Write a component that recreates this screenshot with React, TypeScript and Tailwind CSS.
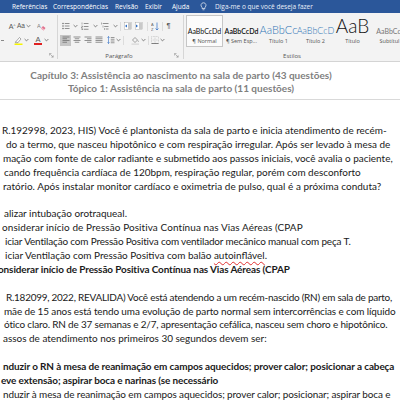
import React from "react";

type Line = { t: string; ml: number; b?: boolean; squiggle?: string; tr?: string };

const lines: Line[] = [
  { t: "R.192998, 2023, HIS) Você é plantonista da sala de parto e inicia atendimento de recém-", ml: 2 },
  { t: "do a termo, que nasceu hipotônico e com respiração irregular. Após ser levado à mesa de", ml: 6 },
  { t: "mação com fonte de calor radiante e submetido aos passos iniciais, você avalia o paciente,", ml: 3 },
  { t: "cando frequência cardíaca de 120bpm, respiração regular, porém com desconforto", ml: 4 },
  { t: "ratório. Após instalar monitor cardíaco e oximetria de pulso, qual é a próxima conduta?", ml: 3, tr: "tracking-[0.05px]" },
  { t: "", ml: 0 },
  { t: "alizar intubação orotraqueal.", ml: 4 },
  { t: "onsiderar início de Pressão Positiva Contínua nas Vias Aéreas (CPAP", ml: 2, tr: "tracking-[0.1px]" },
  { t: "iciar Ventilação com Pressão Positiva com ventilador mecânico manual com peça T.", ml: 5, tr: "tracking-[-0.15px]" },
  { t: "iciar Ventilação com Pressão Positiva com balão ", ml: 5, squiggle: "autoinflável" },
  { t: "onsiderar início de Pressão Positiva Contínua nas Vias Aéreas (CPAP", ml: -2, b: true, tr: "tracking-[-0.1px]" },
  { t: "", ml: 0 },
  { t: "R.182099, 2022, REVALIDA) Você está atendendo a um recém-nascido (RN) em sala de parto,", ml: 6, tr: "tracking-[-0.24px]" },
  { t: "mãe de 15 anos está tendo uma evolução de parto normal sem intercorrências e com líquido", ml: 4, tr: "tracking-[-0.1px]" },
  { t: "ótico claro. RN de 37 semanas e 2/7, apresentação cefálica, nasceu sem choro e hipotônico.", ml: 4, tr: "tracking-[-0.16px]" },
  { t: "assos de atendimento nos primeiros 30 segundos devem ser:", ml: 3 },
  { t: "", ml: 0 },
  { t: "nduzir o RN à mesa de reanimação em campos aquecidos; prover calor; posicionar a cabeça", ml: 3, b: true, tr: "tracking-[-0.1px]" },
  { t: "eve extensão; aspirar boca e narinas (se necessário", ml: 1, b: true, tr: "tracking-[-0.1px]" },
  { t: "nduzir à mesa de reanimação em campos aquecidos; prover calor; posicionar; aspirar boca e", ml: 3, tr: "tracking-[-0.1px]" },
];

const G = "#666";

function Chevron() {
  return (
    <svg width="5" height="4" viewBox="0 0 5 4">
      <path d="M0.6 1 L2.5 2.9 L4.4 1" fill="none" stroke={G} strokeWidth="0.8" />
    </svg>
  );
}

function Launcher() {
  return (
    <svg width="5" height="5" viewBox="0 0 6 6">
      <path d="M0.5 3 V0.5 H3" fill="none" stroke="#888" strokeWidth="0.7" />
      <path d="M1.5 1.5 L5 5 M5 2.8 V5 H2.8" fill="none" stroke="#888" strokeWidth="0.7" />
    </svg>
  );
}

function Bullets() {
  return (
    <svg width="8" height="8" viewBox="0 0 16 16">
      <circle cx="2" cy="3" r="1.5" fill={G} />
      <circle cx="2" cy="8" r="1.5" fill={G} />
      <circle cx="2" cy="13" r="1.5" fill={G} />
      <path d="M5.5 3 H15 M5.5 8 H15 M5.5 13 H15" stroke={G} strokeWidth="1.4" />
    </svg>
  );
}

function Numbering() {
  return (
    <svg width="8" height="8" viewBox="0 0 16 16">
      <path d="M2 1 V5 M1 8 H3 V10 H1 V12 H3 M1 13.5 H3 V16 M1 15 H3" fill="none" stroke={G} strokeWidth="1" />
      <path d="M5.5 3 H15 M5.5 9 H15 M5.5 14.5 H15" stroke={G} strokeWidth="1.4" />
    </svg>
  );
}

function Multilevel() {
  return (
    <svg width="8" height="8" viewBox="0 0 16 16">
      <path d="M1 1 V5 M4 7 V11 M7 12 V16" stroke={G} strokeWidth="1" />
      <path d="M3.5 3 H15 M6.5 9 H15 M9.5 14 H15" stroke={G} strokeWidth="1.4" />
    </svg>
  );
}

function Indent({ inc }: { inc?: boolean }) {
  return (
    <svg width="8" height="8" viewBox="0 0 16 16">
      <rect x="0.5" y="0.5" width="15" height="15" fill="#fff" stroke="#999" strokeWidth="0.8" />
      <path d="M8 4 H14 M8 8 H14 M8 12 H14" stroke={G} strokeWidth="1.4" />
      {inc ? (
        <path d="M2 5 L6 8 L2 11 Z" fill="#2b6cc4" />
      ) : (
        <path d="M6 5 L2 8 L6 11 Z" fill="#2b6cc4" />
      )}
    </svg>
  );
}

function Sort() {
  return (
    <svg width="8" height="9" viewBox="0 0 16 18">
      <text x="0" y="7" fontSize="8" fill={G} fontFamily="Liberation Sans">A</text>
      <text x="0" y="17" fontSize="8" fill={G} fontFamily="Liberation Sans">Z</text>
      <path d="M12 1 V16 M9 13 L12 16 L15 13" fill="none" stroke="#2b6cc4" strokeWidth="1.4" />
    </svg>
  );
}

function Align({ kind }: { kind: "l" | "c" | "r" | "j" }) {
  const rows = [2, 5.5, 9, 12.5];
  const long = 14;
  const short = 9;
  return (
    <svg width="8" height="8" viewBox="0 0 16 16">
      {rows.map((y, i) => {
        const w = kind === "j" ? long : i % 2 === 0 ? long : short;
        const x = kind === "l" || kind === "j" ? 1 : kind === "r" ? 15 - w : (16 - w) / 2;
        return <path key={i} d={`M${x} ${y} H${x + w}`} stroke={G} strokeWidth="1.4" />;
      })}
    </svg>
  );
}

function LineSpacing() {
  return (
    <svg width="8" height="8" viewBox="0 0 16 16">
      <path d="M3 1 V15 M1 3.5 L3 1 L5 3.5 M1 12.5 L3 15 L5 12.5" fill="none" stroke="#2b6cc4" strokeWidth="1.2" />
      <path d="M7.5 3 H15 M7.5 6.5 H15 M7.5 10 H15 M7.5 13.5 H15" stroke={G} strokeWidth="1.3" />
    </svg>
  );
}

function Shading() {
  return (
    <svg width="9" height="9" viewBox="0 0 18 18">
      <path d="M3 8 L8 3 L13 8 L8 13 Z" fill="none" stroke={G} strokeWidth="1.2" />
      <path d="M14 9 Q15.5 11 14 12" fill="none" stroke={G} strokeWidth="1" />
      <rect x="1" y="15" width="15" height="2.5" fill="#d8d8d8" />
    </svg>
  );
}

function Borders() {
  return (
    <svg width="8" height="8" viewBox="0 0 16 16">
      <rect x="1" y="1" width="14" height="14" fill="none" stroke="#aaa" strokeWidth="1" strokeDasharray="1.5 1.5" />
      <path d="M8 1 V15 M1 8 H15" stroke="#aaa" strokeWidth="1" strokeDasharray="1.5 1.5" />
      <path d="M1 15 H15" stroke={G} strokeWidth="1.6" />
    </svg>
  );
}

function Highlighter() {
  return (
    <svg width="9" height="9" viewBox="0 0 18 18">
      <path d="M4 11 L11 3 L14 6 L7 14 Z" fill="#fff" stroke={G} strokeWidth="1.1" />
      <path d="M4 11 L2.5 13.5 L4.5 14 L7 14" fill="none" stroke={G} strokeWidth="1" />
      <rect x="1" y="15" width="16" height="3" fill="#f5f500" />
    </svg>
  );
}

function Eraser() {
  return (
    <svg width="9" height="9" viewBox="0 0 18 18">
      <text x="0" y="11" fontSize="11" fill="#7a7a7a" fontFamily="Liberation Sans">A</text>
      <path d="M8 13 L12 8 L17 12 L13 17 Z" fill="#e0708c" />
      <path d="M8 13 L10 11 L15 15 L13 17 Z" fill="#f4b7c5" />
    </svg>
  );
}

function Sep() {
  return <div className="w-px h-[9px] bg-[#dcdcdc] mx-[2px]" />;
}

function Slot({ w, children }: { w: number; children?: React.ReactNode }) {
  return (
    <div className="flex items-center justify-center shrink-0" style={{ width: w }}>
      {children}
    </div>
  );
}

function Bulb() {
  return (
    <svg width="7" height="9" viewBox="0 0 14 18">
      <path d="M7 1.5 A5 5 0 0 0 4 10.5 V13 H10 V10.5 A5 5 0 0 0 7 1.5 Z" fill="none" stroke="#fff" strokeWidth="1.3" />
      <path d="M5 15.5 H9" stroke="#fff" strokeWidth="1.3" />
    </svg>
  );
}

const styles = [
  { sample: "AaBbCcDd", cls: "text-[7px] text-[#111]", label: "¶ Normal", sel: true },
  { sample: "AaBbCcDd", cls: "text-[7px] text-[#111] font-semibold", label: "¶ Sem Esp..." },
  { sample: "AaBbCc", cls: "text-[11px] text-[#2e74b5] font-light", label: "Título 1" },
  { sample: "AaBbCcD", cls: "text-[9px] text-[#2e74b5] font-light", label: "Título 2" },
  { sample: "AaB", cls: "text-[19px] text-[#111] font-light", label: "Título" },
  { sample: "AaBbCcI", cls: "text-[7px] text-[#777]", label: "Subtítul" },
];

export default function App() {
  return (
    <div className="w-[400px] h-[400px] overflow-hidden bg-white relative">
      {/* tab bar */}
      <div className="h-[13px] bg-[#2b579a] flex items-center text-[6.5px] text-white font-['Open_Sans',sans-serif] whitespace-nowrap overflow-hidden">
        <span className="w-[41px] ml-[12px] shrink-0">Referências</span>
        <span className="w-[62px] shrink-0">Correspondências</span>
        <span className="w-[30px] shrink-0">Revisão</span>
        <span className="w-[27px] shrink-0">Exibir</span>
        <span className="w-[28px] shrink-0">Ajuda</span>
        <span className="w-[15px] shrink-0 flex items-center">
          <Bulb />
        </span>
        <span className="text-[#e8eef8]">Diga-me o que você deseja fazer</span>
      </div>

      {/* ribbon */}
      <div className="h-[49px] bg-[#f3f3f3] border-b border-[#d4d4d4] flex font-['Open_Sans',sans-serif] text-[#444]">
        {/* font group (partial) */}
        <div className="w-[57px] shrink-0 flex flex-col">
          <div className="pt-[6px] h-[20px] flex items-center">
            <Slot w={8} />
            <Slot w={8}>
              <span className="text-[7px] leading-none text-[#555] font-['Liberation_Sans',sans-serif]">
                A<sup className="text-[4px]">^</sup>
              </span>
            </Slot>
            <Slot w={16}>
              <span className="text-[6.5px] leading-none text-[#555] font-['Liberation_Sans',sans-serif] mr-[1px]">Aa</span>
              <Chevron />
            </Slot>
            <Slot w={4} />
            <Slot w={10}>
              <Eraser />
            </Slot>
          </div>
          <div className="h-[14px] flex items-center">
            <Slot w={4}>
              <div className="w-[3px] h-px bg-[#888]" />
            </Slot>
            <Slot w={9} />
            <Slot w={10}>
              <Highlighter />
            </Slot>
            <Slot w={6}>
              <Chevron />
            </Slot>
            <Slot w={4} />
            <Slot w={10}>
              <div className="flex flex-col items-center">
                <span className="text-[7.5px] leading-[7px] text-[#555] font-['Liberation_Sans',sans-serif]">A</span>
                <div className="w-[8px] h-[2px] bg-[#e02020]" />
              </div>
            </Slot>
            <Slot w={6}>
              <Chevron />
            </Slot>
          </div>
          <div className="flex-1 flex items-end justify-end pr-[3px] pb-[3px]">
            <Launcher />
          </div>
        </div>
        <div className="w-px bg-[#d6d6d6] my-[2px]" />

        {/* paragraph group */}
        <div className="w-[125px] shrink-0 flex flex-col">
          <div className="pt-[6px] h-[20px] flex items-center">
            <Slot w={2} />
            <Slot w={12}>
              <Bullets />
            </Slot>
            <Slot w={6}>
              <Chevron />
            </Slot>
            <Slot w={14}>
              <Numbering />
            </Slot>
            <Slot w={6}>
              <Chevron />
            </Slot>
            <Slot w={14}>
              <Multilevel />
            </Slot>
            <Slot w={6}>
              <Chevron />
            </Slot>
            <Sep />
            <Slot w={10}>
              <Indent />
            </Slot>
            <Slot w={12}>
              <Indent inc />
            </Slot>
            <Sep />
            <Slot w={10}>
              <Sort />
            </Slot>
            <Sep />
            <Slot w={7}>
              <span className="text-[7.5px] leading-none text-[#555] font-['Liberation_Sans',sans-serif]">¶</span>
            </Slot>
          </div>
          <div className="h-[14px] flex items-center">
            <Slot w={2} />
            <Slot w={11}>
              <div className="w-[11px] h-[11px] bg-[#c5c5c5] flex items-center justify-center">
                <Align kind="l" />
              </div>
            </Slot>
            <Slot w={11}>
              <Align kind="c" />
            </Slot>
            <Slot w={11}>
              <Align kind="r" />
            </Slot>
            <Slot w={11}>
              <Align kind="j" />
            </Slot>
            <Slot w={3} />
            <Slot w={8}>
              <LineSpacing />
            </Slot>
            <Slot w={6}>
              <Chevron />
            </Slot>
            <Sep />
            <Slot w={4} />
            <Slot w={10}>
              <Shading />
            </Slot>
            <Slot w={6}>
              <Chevron />
            </Slot>
            <Sep />
            <Slot w={8}>
              <Borders />
            </Slot>
            <Slot w={6}>
              <Chevron />
            </Slot>
          </div>
          <div className="flex-1 flex items-end pb-[1px] relative">
            <span className="flex-1 text-center text-[6px] leading-[8px] text-[#555] pl-[6px]">Parágrafo</span>
            <span className="pr-[4px] pb-[2px]">
              <Launcher />
            </span>
          </div>
        </div>
        <div className="w-px bg-[#d6d6d6] my-[2px]" />

        {/* styles group */}
        <div className="flex-1 flex flex-col overflow-hidden">
          <div className="flex h-[32px] mt-[2px] ml-[2px]">
            {styles.map((s, i) => (
              <div
                key={i}
                className={`w-[37px] shrink-0 flex flex-col items-center ${
                  s.sel ? "border border-[#c6c6c6] bg-[#fbfbfb]" : "border border-transparent"
                }`}
              >
                <div className="h-[19px] flex items-end justify-center">
                  <span className={`${s.cls} leading-none whitespace-nowrap font-['Lato',sans-serif]`}>{s.sample}</span>
                </div>
                <div className="mt-[2px] h-[9px] text-[5.5px] leading-[9px] text-[#555] whitespace-nowrap">{s.label}</div>
              </div>
            ))}
          </div>
          <div className="flex-1 flex items-end pb-[1px]">
            <span className="w-[260px] text-center text-[6px] leading-[8px] text-[#555]">Estilos</span>
          </div>
        </div>
      </div>

      {/* document */}
      <div className="font-['Lato',sans-serif]">
        <div className="w-[362px] pt-[7px] text-center font-bold text-[#7f7f7f] text-[10px] leading-[12.5px] whitespace-nowrap">
          <div>Capítulo 3: Assistência ao nascimento na sala de parto (43 questões)</div>
          <div>Tópico 1: Assistência na sala de parto (11 questões)</div>
        </div>
        <div className="mt-[5px] h-px bg-[#d9d9d9]" />
        <div className="pt-[24px] text-[9.95px] leading-[13.9px] text-[#1a1a1a] whitespace-nowrap">
          {lines.map((l, i) => (
            <div key={i} className={`h-[13.9px] ${l.b ? "font-bold" : ""} ${l.tr ?? ""}`} style={{ marginLeft: l.ml }}>
              {l.t}
              {l.squiggle && (
                <span className="underline decoration-wavy decoration-[#e03030] decoration-1 underline-offset-2">
                  {l.squiggle}
                </span>
              )}
              {l.squiggle && "."}
            </div>
          ))}
        </div>
      </div>
    </div>
  );
}
